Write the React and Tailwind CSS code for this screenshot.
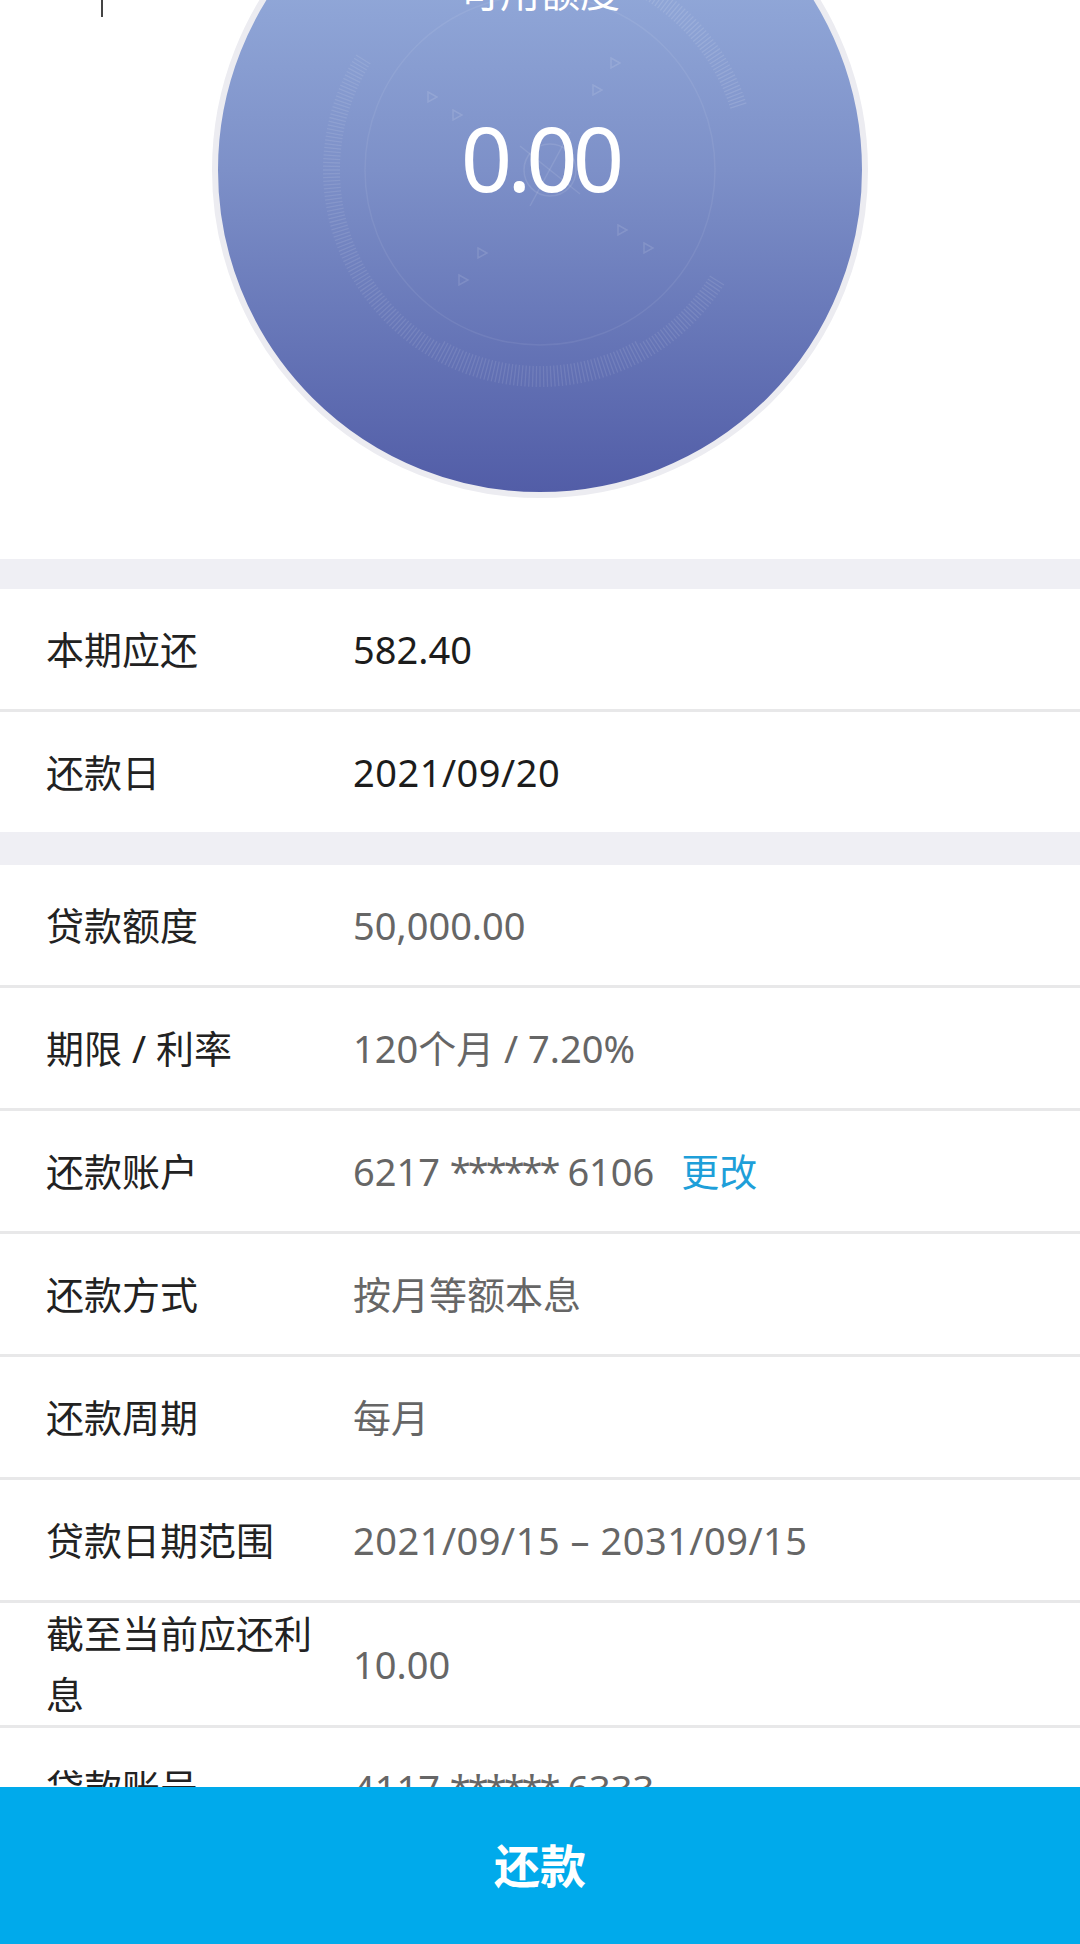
import React from 'react';

const ticks = Array.from({ length: 360 }, (_, i) => i).filter(
    (a) => (a >= 32 && a <= 212) || (a >= 298 && a <= 342)
);

const triangles = [
    [-108, -73], [-83, -55], [57, -80], [75, -107],
    [82, 60], [108, 78], [-58, 83], [-77, 110],
];

function Dial() {
    const c = 322;
    return (
        <svg className="absolute inset-0" width="644" height="644" viewBox="0 0 644 644">
            {ticks.map((a) => {
                const r = (a * Math.PI) / 180;
                const long = a > 60 && a < 120;
                const r1 = 217;
                const r2 = long ? 196 : 200;
                return (
                    <line
                        key={a}
                        x1={c + r1 * Math.cos(r)}
                        y1={c + r1 * Math.sin(r)}
                        x2={c + r2 * Math.cos(r)}
                        y2={c + r2 * Math.sin(r)}
                        stroke="#ffffff"
                        strokeOpacity={a > 300 ? 0.12 : 0.1}
                        strokeWidth="1.3"
                    />
                );
            })}
            <circle cx={c} cy={c} r="175" fill="none" stroke="#ffffff" strokeOpacity="0.07" strokeWidth="1.5" />
            {triangles.map(([x, y], i) => (
                <path
                    key={i}
                    d={`M${c + x - 4} ${c + y - 5} L${c + x + 5} ${c + y} L${c + x - 4} ${c + y + 5} Z`}
                    fill="none"
                    stroke="#ffffff"
                    strokeOpacity="0.12"
                    strokeWidth="1.5"
                />
            ))}
            <circle cx={c + 10} cy={c} r="26" fill="none" stroke="#ffffff" strokeOpacity="0.1" strokeWidth="1.5" />
            <line x1={c - 20} y1={c - 24} x2={c + 40} y2={c + 24} stroke="#ffffff" strokeOpacity="0.1" strokeWidth="1.5" />
            <line x1={c + 30} y1={c - 38} x2={c - 10} y2={c + 36} stroke="#ffffff" strokeOpacity="0.1" strokeWidth="1.5" />
        </svg>
    );
}

// masked numbers: asterisks are tighter in the app font
function Masked({ head, tail }) {
    return (
        <>
            {head} <span className="tracking-[-3px]">******</span> {tail}
        </>
    );
}

function Row({ label, value, strong, link, wide }) {
    return (
        <div className="flex items-center min-h-[120px] pl-[46px] bg-white">
            <div className="w-[290px] mr-[17px] text-[38px] leading-[1.6] text-[#222222]">{label}</div>
            <div
                className={`text-[38px] leading-[60px] whitespace-nowrap ${strong ? 'text-[#1c1c1c]' : 'text-[#666666]'} ${wide ? 'tracking-[0.5px]' : ''}`}
            >
                {value}
                {link && <span className="ml-[27px] text-[#1e9fd9]">{link}</span>}
            </div>
        </div>
    );
}

function Divider() {
    return <div className="h-[3px] bg-[#e8e8e9]" />;
}

export default function App() {
    return (
        <div className="relative w-[1080px] h-[1944px] overflow-hidden bg-white flex flex-col font-['Noto_Sans','Noto_Sans_CJK_SC',sans-serif]">
            <div className="absolute left-[101px] top-0 w-[2px] h-[17px] bg-[#444444]" />

            <div className="flex-1 overflow-hidden">
                <div className="-mt-[158px] flex justify-center pb-[61px]">
                    <div className="relative w-[656px] h-[656px] rounded-full border-[6px] border-[#ececf1] bg-linear-to-b from-[#a0b9e4] via-[#7d90c8] to-[#525da7] flex flex-col items-center overflow-hidden">
                        <Dial />
                        <div className="relative mt-[124px] text-[40px] leading-[40px] text-white">可用额度</div>
                        <div className="relative mt-[100px] text-[90px] leading-[90px] tracking-[-5px] text-white">0.00</div>
                    </div>
                </div>

                <div className="h-[30px] bg-[#efeff4]" />
                <Row label="本期应还" value="582.40" strong />
                <Divider />
                <Row label="还款日" value="2021/09/20" strong wide />
                <div className="h-[33px] bg-[#efeff4]" />

                <Row label="贷款额度" value="50,000.00" />
                <Divider />
                <Row label="期限 / 利率" value="120个月 / 7.20%" />
                <Divider />
                <Row label="还款账户" value={<Masked head="6217" tail="6106" />} link="更改" />
                <Divider />
                <Row label="还款方式" value="按月等额本息" />
                <Divider />
                <Row label="还款周期" value="每月" />
                <Divider />
                <Row label="贷款日期范围" value="2021/09/15 – 2031/09/15" wide />
                <Divider />
                <Row label="截至当前应还利息" value="10.00" />
                <Divider />
                <Row label="贷款账号" value={<Masked head="4117" tail="6333" />} />
                <Divider />
            </div>

            <button className="h-[157px] shrink-0 bg-[#00aaeb] text-white text-[46px] font-bold">
                还款
            </button>
        </div>
    );
}
